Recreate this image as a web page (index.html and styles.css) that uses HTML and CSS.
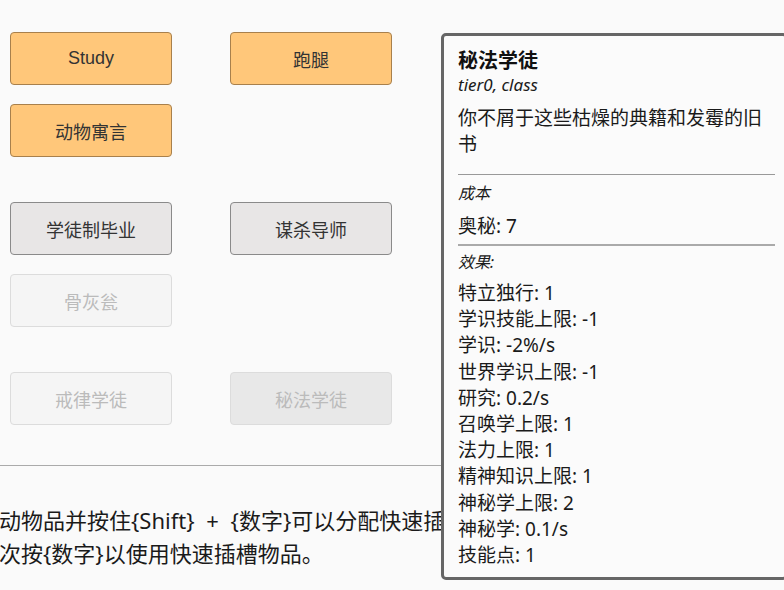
FILE: index.html
```html
<!DOCTYPE html>
<html lang="zh-CN">
<head>
  <meta charset="UTF-8" />
  <title>Classes</title>
  <link rel="stylesheet" href="styles.css">
</head>
<body>
  <div class="main">
    <div class="group">
      <button class="btn btn-active">Study</button>
      <button class="btn btn-active">跑腿</button>
      <button class="btn btn-active">动物寓言</button>
    </div>

    <div class="group">
      <button class="btn">学徒制毕业</button>
      <button class="btn">谋杀导师</button>
      <button class="btn btn-locked">骨灰瓮</button>
    </div>

    <div class="group last">
      <button class="btn btn-locked">戒律学徒</button>
      <button class="btn btn-locked btn-hover">秘法学徒</button>
    </div>
  </div>

  <hr class="divider" />

  <p class="hint">拖动物品并按住{Shift} + {数字}可以分配快速插槽，<br>再次按{数字}以使用快速插槽物品。</p>

  <div class="tooltip">
    <div class="tt-title">秘法学徒</div>
    <div class="tt-tags">tier0, class</div>
    <div class="tt-desc">你不屑于这些枯燥的典籍和发霉的旧书</div>

    <hr class="tt-sep thin" />
    <div class="tt-label">成本</div>
    <div class="tt-line">奥秘: 7</div>

    <hr class="tt-sep" />
    <div class="tt-label">效果:</div>
    <div class="tt-list">
      <div class="tt-line">特立独行: 1</div>
      <div class="tt-line">学识技能上限: -1</div>
      <div class="tt-line">学识: -2%/s</div>
      <div class="tt-line">世界学识上限: -1</div>
      <div class="tt-line">研究: 0.2/s</div>
      <div class="tt-line">召唤学上限: 1</div>
      <div class="tt-line">法力上限: 1</div>
      <div class="tt-line">精神知识上限: 1</div>
      <div class="tt-line">神秘学上限: 2</div>
      <div class="tt-line">神秘学: 0.1/s</div>
      <div class="tt-line">技能点: 1</div>
    </div>
  </div>
</body>
</html>
```

FILE: styles.css
```css
* {
  box-sizing: border-box;
  margin: 0;
  padding: 0;
}

body {
  background: #fafafa;
  color: #1a1a1a;
  font-family: "Noto Sans", "Noto Sans CJK SC", sans-serif;
  overflow: hidden;
  height: 100vh;
}

.main {
  padding: 32px 10px 0;
}

.group {
  display: grid;
  grid-template-columns: 162px 162px;
  gap: 19px 58px;
  margin-bottom: 45px;
}

.group.last {
  margin-bottom: 40px;
}

.btn {
  height: 53px;
  font-family: "Liberation Sans", "Noto Sans CJK SC", sans-serif;
  font-size: 18px;
  color: #333;
  background: #e8e6e6;
  border: 1px solid #8a8a8a;
  border-radius: 4px;
  cursor: pointer;
}

.btn-active {
  background: #ffc77a;
  border-color: #a8804c;
}

.btn-locked {
  background: #f5f5f5;
  border-color: #dcdcdc;
  color: #bbb;
}

.btn-hover {
  background: #e8e8e8;
}

.divider {
  border: none;
  border-top: 1px solid #aaa;
  margin: 0;
}

.hint {
  margin: 38px 0 0 -23px;
  font-size: 22px;
  line-height: 33px;
  word-spacing: 6px;
  white-space: nowrap;
}

.tooltip {
  position: absolute;
  left: 441px;
  top: 33px;
  width: 347px;
  padding: 12px 0 9px 14px;
  background: #fbfbfb;
  border: 3px solid #666;
  border-radius: 5px;
}

.tt-title {
  font-size: 20px;
  font-weight: bold;
  line-height: 26px;
  color: #111;
}

.tt-tags {
  font-size: 17px;
  font-style: italic;
  line-height: 22px;
}

.tt-desc {
  margin-top: 9px;
  font-size: 19px;
  line-height: 26px;
  width: 317px;
}

.tt-sep {
  border: none;
  border-top: 2px solid #aaa;
  width: 317px;
  margin: 16px 0 5px;
}

.tt-sep.thin {
  border-top: 1px solid #999;
  margin: 17px 0 7px;
}

.tt-label {
  font-size: 16px;
  font-style: italic;
  line-height: 22px;
}

.tt-line {
  font-size: 19px;
  line-height: 26px;
}

.tt-label + .tt-line {
  margin-top: 9px;
}

.tt-list {
  margin-top: 7px;
}

.tt-list .tt-line {
  line-height: 26.2px;
}

.tt-line + .tt-sep {
  margin-top: 5px;
}
```
